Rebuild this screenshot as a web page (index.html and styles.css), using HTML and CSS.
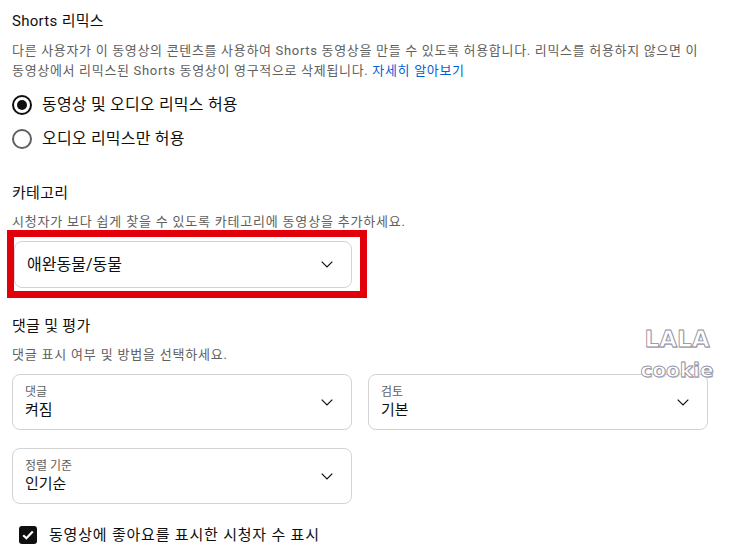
FILE: index.html
```html
<!DOCTYPE html>
<html lang="ko">
<head>
<meta charset="utf-8">
<link rel="stylesheet" href="styles.css">
</head>
<body>
<div class="page">
  <section class="sec-shorts">
    <h2 class="heading">Shorts 리믹스</h2>
    <p class="desc desc-tight">다른 사용자가 이 동영상의 콘텐츠를 사용하여 Shorts 동영상을 만들 수 있도록 허용합니다. 리믹스를 허용하지 않으면 이<br>동영상에서 리믹스된 Shorts 동영상이 영구적으로 삭제됩니다. <a class="link">자세히 알아보기</a></p>
    <div class="radios">
      <label class="radio-row"><span class="radio on"></span><span class="radio-text">동영상 및 오디오 리믹스 허용</span></label>
      <label class="radio-row"><span class="radio"></span><span class="radio-text">오디오 리믹스만 허용</span></label>
    </div>
  </section>

  <section class="sec-cat">
    <h2 class="heading">카테고리</h2>
    <p class="desc">시청자가 보다 쉽게 찾을 수 있도록 카테고리에 동영상을 추가하세요.</p>
    <div class="select select-cat">
      <span class="value value-big">애완동물/동물</span>
      <svg class="chev" width="12" height="7" viewBox="0 0 12 7"><path d="M0.7 0.7 L6 6 L11.3 0.7" fill="none" stroke="#0f0f0f" stroke-width="1.2"/></svg>
    </div>
    <div class="highlight"></div>
  </section>

  <section class="sec-comments">
    <h2 class="heading">댓글 및 평가</h2>
    <p class="desc">댓글 표시 여부 및 방법을 선택하세요.</p>
    <div class="select-row">
      <div class="select select-labeled">
        <div class="sel-text"><span class="label">댓글</span><span class="value">켜짐</span></div>
        <svg class="chev" width="12" height="7" viewBox="0 0 12 7"><path d="M0.7 0.7 L6 6 L11.3 0.7" fill="none" stroke="#0f0f0f" stroke-width="1.2"/></svg>
      </div>
      <div class="select select-labeled">
        <div class="sel-text"><span class="label">검토</span><span class="value">기본</span></div>
        <svg class="chev" width="12" height="7" viewBox="0 0 12 7"><path d="M0.7 0.7 L6 6 L11.3 0.7" fill="none" stroke="#0f0f0f" stroke-width="1.2"/></svg>
      </div>
    </div>
    <div class="select-row row-second">
      <div class="select select-labeled">
        <div class="sel-text"><span class="label">정렬 기준</span><span class="value">인기순</span></div>
        <svg class="chev" width="12" height="7" viewBox="0 0 12 7"><path d="M0.7 0.7 L6 6 L11.3 0.7" fill="none" stroke="#0f0f0f" stroke-width="1.2"/></svg>
      </div>
    </div>
    <label class="check-row">
      <span class="checkbox"><svg width="12" height="10" viewBox="0 0 12 10"><path d="M1.2 5.2 L4.4 8.2 L10.8 1.6" fill="none" stroke="#fff" stroke-width="2.2"/></svg></span>
      <span class="check-text">동영상에 좋아요를 표시한 시청자 수 표시</span>
    </label>
  </section>

  <div class="watermark"><span class="wm-1">LALA</span><span class="wm-2">cookie</span></div>
</div>
</body>
</html>
```

FILE: styles.css
```css
* { box-sizing: border-box; }
html, body { margin: 0; padding: 0; background: #fff; }
body {
  font-family: Roboto, "Noto Sans CJK KR", sans-serif;
  color: #0f0f0f;
  width: 750px;
  height: 554px;
  overflow: hidden;
}
.page {
  position: relative;
  padding: 11px 12px 0 12px;
}
.heading {
  margin: 0;
  font-size: 15px;
  font-weight: 400;
  line-height: 20px;
  height: 20px;
  letter-spacing: 0.3px;
}
.desc {
  margin: 10px 0 0 0;
  font-size: 13px;
  line-height: 20px;
  color: #606060;
  letter-spacing: 0.8px;
  white-space: nowrap;
}
.desc-tight { letter-spacing: 0.68px; }
.link { color: #065fd4; text-decoration: none; }
.radios {
  margin-top: 7px;
  display: flex;
  flex-direction: column;
}
.radio-row {
  display: flex;
  align-items: center;
  height: 34px;
  gap: 10px;
}
.radio {
  width: 20px;
  height: 20px;
  border-radius: 50%;
  border: 2px solid #606060;
  display: flex;
  align-items: center;
  justify-content: center;
}
.radio.on { border-color: #0f0f0f; }
.radio.on::after {
  content: "";
  width: 10px;
  height: 10px;
  border-radius: 50%;
  background: #0f0f0f;
}
.radio-text { font-size: 16px; line-height: 20px; letter-spacing: 0.2px; }

.sec-cat { margin-top: 27px; position: relative; }
.sec-cat .desc { margin-top: 9px; }
.select {
  border: 1px solid #d3d3d3;
  border-radius: 8px;
  display: flex;
  align-items: center;
  justify-content: space-between;
  padding: 0 18px 0 12px;
  background: #fff;
}
.select-cat {
  margin: 9px 0 0 2px;
  width: 338px;
  height: 47px;
}
.value { font-size: 15px; line-height: 20px; }
.value-big { font-size: 16px; }
.chev { flex: none; }
.highlight {
  position: absolute;
  left: -5px;
  top: 47px;
  width: 360px;
  height: 68px;
  border: 7px solid #e2000b;
}

.sec-comments { margin-top: 28px; }
.sec-comments .desc { margin-top: 9px; }
.select-row {
  display: flex;
  gap: 16px;
  margin-top: 9px;
}
.row-second { margin-top: 18px; }
.select-labeled {
  width: 340px;
  height: 56px;
}
.sel-text {
  display: flex;
  flex-direction: column;
}
.label {
  font-size: 12px;
  line-height: 16px;
  color: #606060;
}
.check-row {
  display: flex;
  align-items: center;
  gap: 12px;
  margin: 21px 0 0 7px;
}
.checkbox {
  width: 18px;
  height: 18px;
  border-radius: 3px;
  background: #0f0f0f;
  display: flex;
  align-items: center;
  justify-content: center;
}
.check-text { font-size: 15px; line-height: 20px; letter-spacing: 0.8px; }

.watermark {
  position: absolute;
  left: 630px;
  top: 324px;
  width: 94px;
  display: flex;
  flex-direction: column;
  align-items: center;
  font-family: "DejaVu Sans", sans-serif;
  font-weight: 700;
  color: #fff;
  -webkit-text-stroke: 0.8px #8c8c9c;
  text-shadow: 1px 1px 0 #cfcfd6;
}
.wm-1 { font-size: 23px; line-height: 30px; }
.wm-2 { font-size: 20px; line-height: 32px; }
```
